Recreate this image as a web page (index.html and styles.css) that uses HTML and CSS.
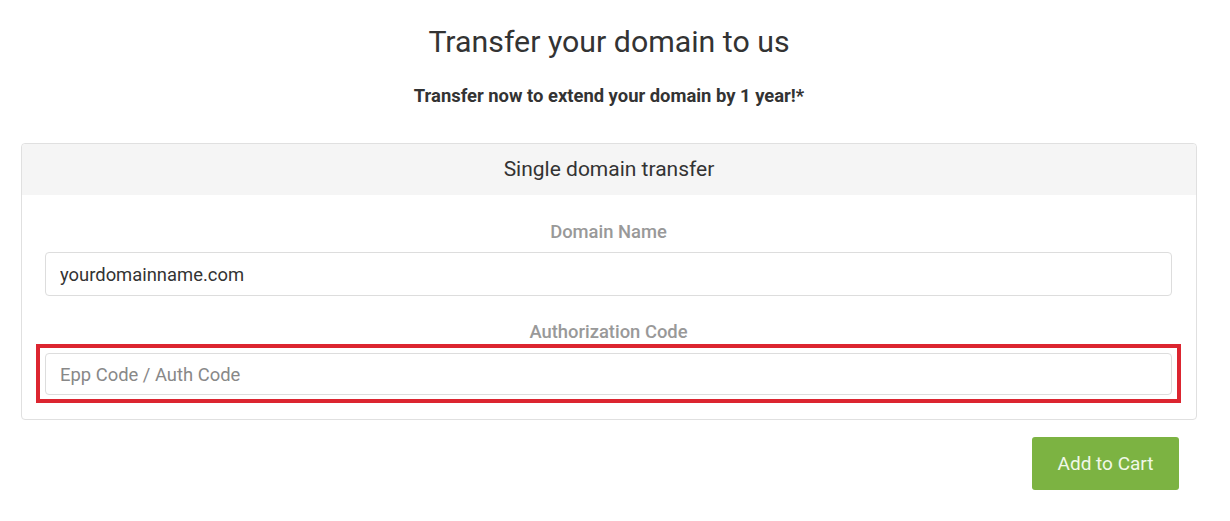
FILE: index.html
```html
<!DOCTYPE html>
<html lang="en">
<head>
<meta charset="utf-8">
<title>Transfer your domain to us</title>
<link rel="stylesheet" href="styles.css">
</head>
<body>
<main class="page">
  <h1 class="title">Transfer your domain to us</h1>
  <p class="subtitle">Transfer now to extend your domain by 1 year!*</p>
  <section class="card">
    <div class="card-header">Single domain transfer</div>
    <div class="card-body">
      <label class="field-label" for="domain">Domain Name</label>
      <input class="field-input" id="domain" type="text" value="yourdomainname.com">
      <label class="field-label second" for="auth">Authorization Code</label>
      <div class="highlight-wrap">
        <input class="field-input" id="auth" type="text" placeholder="Epp Code / Auth Code">
        <span class="highlight"></span>
      </div>
    </div>
  </section>
  <div class="actions">
    <button class="btn-cart" type="button">Add to Cart</button>
  </div>
</main>
</body>
</html>
```
FILE: styles.css
```css
* { box-sizing: border-box; }
html, body { margin: 0; padding: 0; background: #fff; }
body {
  font-family: Roboto, "Liberation Sans", Arial, sans-serif;
  color: #333;
}
.page {
  width: 1176px;
  margin-left: 21px;
  padding-top: 24px;
}
.title {
  margin: 0;
  text-align: center;
  font-size: 30.3px;
  font-weight: 400;
  line-height: 36px;
  color: #333;
}
.subtitle {
  margin: 24px 0 0;
  text-align: center;
  font-size: 18.4px;
  font-weight: 700;
  line-height: 24px;
  color: #333;
}
.card {
  margin-top: 35px;
  border: 1px solid #e0e0e0;
  border-radius: 4px;
}
.card-header {
  background: #f5f5f5;
  height: 51px;
  line-height: 51px;
  text-align: center;
  font-size: 21px;
  color: #333;
  border-radius: 4px 4px 0 0;
}
.card-body {
  padding: 25px 24px 24px 23px;
  display: flex;
  flex-direction: column;
}
.field-label {
  display: block;
  text-align: center;
  font-size: 18.4px;
  font-weight: 500;
  color: #999;
  line-height: 24px;
  margin-bottom: 8px;
}
.field-label.second { margin-top: 24px; margin-bottom: 9px; }
.field-input {
  display: block;
  width: 100%;
  height: 44px;
  border: 1px solid #ddd;
  border-radius: 4px;
  padding: 0 14px;
  font-family: Roboto, "Liberation Sans", Arial, sans-serif;
  font-size: 18.4px;
  color: #333;
  background: #fff;
  outline: none;
}
.field-input::placeholder { color: #888; }
.highlight-wrap { position: relative; }
.highlight-wrap .field-input { height: 42px; }
.highlight {
  position: absolute;
  left: -9px;
  right: -9px;
  top: -9px;
  bottom: -8px;
  border: 4px solid #dc2530;
  pointer-events: none;
}
.actions {
  display: flex;
  justify-content: flex-end;
  padding-right: 18px;
  margin-top: 17px;
}
.btn-cart {
  width: 147px;
  height: 53px;
  border: none;
  border-radius: 3px;
  background: #7cb342;
  color: #f1f8e9;
  font-family: Roboto, "Liberation Sans", Arial, sans-serif;
  font-size: 19px;
  cursor: pointer;
}
```
